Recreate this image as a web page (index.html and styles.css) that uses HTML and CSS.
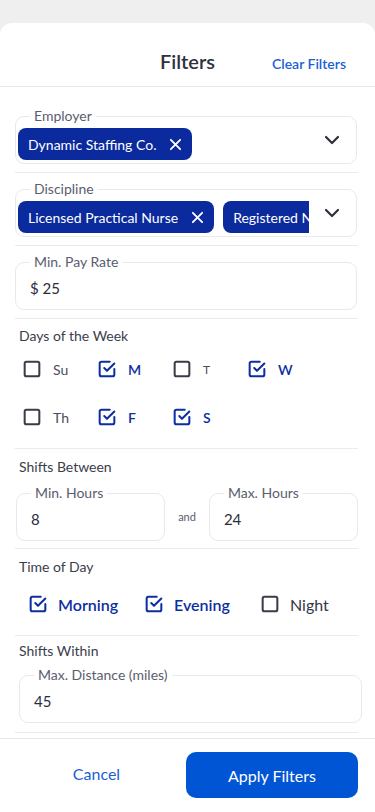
FILE: index.html
```html
<!DOCTYPE html>
<html lang="en">
<head>
    <meta charset="UTF-8">
    <meta name="viewport" content="width=device-width, initial-scale=1.0">
    <title>Filters</title>
    <link rel="stylesheet" href="styles.css">
</head>
<body>
    <div class="sheet">
        <div class="header">
            <span></span>
            <h1 class="title">Filters</h1>
            <a class="clear-link" href="#">Clear Filters</a>
        </div>

        <div class="content">
            <div class="section section-first">
                <fieldset class="field">
                    <legend>Employer</legend>
                    <div class="chips-row">
                        <div class="chips">
                            <span class="chip">Dynamic Staffing Co.
                                <svg class="chip-x" viewBox="0 0 14 14"><path d="M2 2l10 10M12 2l-10 10"/></svg>
                            </span>
                        </div>
                        <svg class="chevron" viewBox="0 0 24 24"><path d="M6 9l6 6l6 -6"/></svg>
                    </div>
                </fieldset>
            </div>

            <div class="section">
                <fieldset class="field">
                    <legend>Discipline</legend>
                    <div class="chips-row">
                        <div class="chips">
                            <span class="chip">Licensed Practical Nurse
                                <svg class="chip-x" viewBox="0 0 14 14"><path d="M2 2l10 10M12 2l-10 10"/></svg>
                            </span>
                            <span class="chip">Registered Nurse
                                <svg class="chip-x" viewBox="0 0 14 14"><path d="M2 2l10 10M12 2l-10 10"/></svg>
                            </span>
                        </div>
                        <svg class="chevron" viewBox="0 0 24 24"><path d="M6 9l6 6l6 -6"/></svg>
                    </div>
                </fieldset>
            </div>

            <div class="section">
                <fieldset class="field">
                    <legend>Min. Pay Rate</legend>
                    <div class="value">$ 25</div>
                </fieldset>
            </div>

            <div class="section section-days">
                <div class="section-title">Days of the Week</div>
                <div class="days">
                    <label class="check"><svg class="box" viewBox="0 0 24 24"><rect x="4" y="4" width="16" height="16" rx="2"/></svg><span>Su</span></label>
                    <label class="check checked"><svg class="box" viewBox="0 0 24 24"><path d="M9 11l3 3l8 -8"/><path d="M20 12v6a2 2 0 0 1 -2 2h-12a2 2 0 0 1 -2 -2v-12a2 2 0 0 1 2 -2h9"/></svg><span>M</span></label>
                    <label class="check"><svg class="box" viewBox="0 0 24 24"><rect x="4" y="4" width="16" height="16" rx="2"/></svg><span class="small">T</span></label>
                    <label class="check checked"><svg class="box" viewBox="0 0 24 24"><path d="M9 11l3 3l8 -8"/><path d="M20 12v6a2 2 0 0 1 -2 2h-12a2 2 0 0 1 -2 -2v-12a2 2 0 0 1 2 -2h9"/></svg><span>W</span></label>
                    <label class="check"><svg class="box" viewBox="0 0 24 24"><rect x="4" y="4" width="16" height="16" rx="2"/></svg><span>Th</span></label>
                    <label class="check checked"><svg class="box" viewBox="0 0 24 24"><path d="M9 11l3 3l8 -8"/><path d="M20 12v6a2 2 0 0 1 -2 2h-12a2 2 0 0 1 -2 -2v-12a2 2 0 0 1 2 -2h9"/></svg><span>F</span></label>
                    <label class="check checked"><svg class="box" viewBox="0 0 24 24"><path d="M9 11l3 3l8 -8"/><path d="M20 12v6a2 2 0 0 1 -2 2h-12a2 2 0 0 1 -2 -2v-12a2 2 0 0 1 2 -2h9"/></svg><span>S</span></label>
                </div>
            </div>

            <div class="section section-hours">
                <div class="section-title">Shifts Between</div>
                <div class="hours">
                    <fieldset class="field">
                        <legend>Min. Hours</legend>
                        <div class="value">8</div>
                    </fieldset>
                    <span class="and">and</span>
                    <fieldset class="field">
                        <legend>Max. Hours</legend>
                        <div class="value">24</div>
                    </fieldset>
                </div>
            </div>

            <div class="section section-time">
                <div class="section-title">Time of Day</div>
                <div class="times">
                    <label class="check check-lg checked"><svg class="box" viewBox="0 0 24 24"><path d="M9 11l3 3l8 -8"/><path d="M20 12v6a2 2 0 0 1 -2 2h-12a2 2 0 0 1 -2 -2v-12a2 2 0 0 1 2 -2h9"/></svg><span>Morning</span></label>
                    <label class="check check-lg checked"><svg class="box" viewBox="0 0 24 24"><path d="M9 11l3 3l8 -8"/><path d="M20 12v6a2 2 0 0 1 -2 2h-12a2 2 0 0 1 -2 -2v-12a2 2 0 0 1 2 -2h9"/></svg><span>Evening</span></label>
                    <label class="check check-lg"><svg class="box" viewBox="0 0 24 24"><rect x="4" y="4" width="16" height="16" rx="2"/></svg><span>Night</span></label>
                </div>
            </div>

            <div class="section section-last">
                <div class="section-title">Shifts Within</div>
                <fieldset class="field field-distance">
                    <legend>Max. Distance (miles)</legend>
                    <div class="value">45</div>
                </fieldset>
            </div>
        </div>

        <div class="footer">
            <a class="cancel-link" href="#">Cancel</a>
            <button class="apply-button">Apply Filters</button>
        </div>
    </div>
</body>
</html>
```

FILE: styles.css
```css
body {
    font-family: Lato, "Noto Sans", Arial, sans-serif;
    background-color: #efefef;
    color: #353746;
    margin: 0;
    padding: 0;
}
.sheet {
    margin-top: 23px;
    background-color: #fff;
    border-radius: 12px 12px 0 0;
    height: 789px;
    overflow: hidden;
}
.header {
    display: grid;
    grid-template-columns: 1fr auto 1fr;
    align-items: baseline;
    box-sizing: border-box;
    height: 64px;
    padding-top: 26px;
    border-bottom: 1px solid #e6e6e8;
}
.title {
    margin: 0;
    font-size: 20px;
    font-weight: 600;
    line-height: 24px;
    color: #2e303c;
}
.clear-link {
    justify-self: end;
    margin-right: 29px;
    color: #1b5fd5;
    font-size: 14px;
    font-weight: 600;
    text-decoration: none;
}
.content {
    padding: 0 17px 5px 15px;
}
.section {
    border-bottom: 1px solid #ebebee;
    padding: 8px 0 8px;
}
.section-first {
    padding-top: 21px;
}
.section-title {
    font-size: 14px;
    line-height: 20px;
    padding-left: 4px;
    color: #3b3d4c;
}

/* outlined fields */
.field {
    margin: 0 1px 0 0;
    padding: 0;
    border: 1px solid #e9e9ed;
    border-radius: 9px;
    min-width: 0;
}
.field legend {
    margin-left: 14px;
    padding: 0 4px;
    font-size: 14px;
    line-height: 16px;
    color: #5a5d6f;
}
.chips-row {
    display: flex;
    align-items: center;
    padding: 4px 12px 3px 2px;
}
.chips {
    flex: 1;
    display: flex;
    gap: 9px;
    overflow: hidden;
    white-space: nowrap;
    min-width: 0;
    margin-right: 11px;
}
.chip {
    flex-shrink: 0;
    display: inline-flex;
    align-items: center;
    gap: 13px;
    height: 32px;
    padding: 0 10px;
    background-color: #0a2a9e;
    color: #fff;
    font-size: 14px;
    border-radius: 8px;
}
.chip-x {
    width: 13px;
    height: 13px;
    fill: none;
    stroke: #fff;
    stroke-width: 2;
    stroke-linecap: round;
}
.chevron {
    width: 24px;
    height: 24px;
    margin-top: -9px;
    fill: none;
    stroke: #2e303c;
    stroke-width: 2.2;
    stroke-linecap: round;
    stroke-linejoin: round;
}
.value {
    padding: 8px 14px 11px;
    font-size: 15px;
    line-height: 20px;
    color: #2b2d3a;
}

/* checkboxes */
.days {
    display: grid;
    grid-template-columns: repeat(4, 75px);
    grid-auto-rows: 40px;
    row-gap: 8px;
    margin: 3px 0 3px 6px;
}
.check {
    display: flex;
    align-items: center;
    gap: 10px;
    font-size: 14px;
    color: #4a4c5b;
}
.check .box {
    width: 22px;
    height: 22px;
    flex-shrink: 0;
    fill: none;
    stroke: #3a3c4a;
    stroke-width: 2.2;
    stroke-linecap: round;
    stroke-linejoin: round;
}
.check.checked {
    color: #0d2ea3;
    font-weight: 600;
}
.check.checked .box {
    stroke: #0d2ea3;
}
.check .small {
    font-size: 12px;
}
.section-days {
    padding: 7px 0 8px;
}

.section-hours {
    padding-bottom: 7px;
}
.hours {
    display: flex;
    align-items: center;
    gap: 13px;
    margin-top: 8px;
    margin-left: 1px;
}
.hours .field {
    flex: 1;
    margin: 0;
}
.and {
    font-size: 11px;
    color: #5a5d6f;
    margin-top: 6px;
}

.section-time {
    padding: 8px 0 11px;
}
.times {
    display: grid;
    grid-template-columns: repeat(3, 116px);
    height: 40px;
    margin: 7px 0 0 12px;
}
.check-lg {
    font-size: 16px;
    gap: 9px;
    color: #353746;
}

.section-time .section-title {
    margin-bottom: 1px;
}

.section-last {
    padding: 5px 0 9px;
}
.field-distance {
    margin: 6px -4px 0 4px;
}

/* footer */
.footer {
    display: flex;
    align-items: center;
    border-top: 1px solid #e6e6e8;
    padding: 13px 17px 13px 15px;
}
.cancel-link {
    flex: 1;
    padding: 0 8px 4px 0;
    text-align: center;
    color: #1b5fd5;
    font-size: 16px;
    text-decoration: none;
}
.apply-button {
    width: 172px;
    height: 46px;
    border: none;
    border-radius: 10px;
    background-color: #0055d4;
    color: #fff;
    font-family: inherit;
    font-size: 16px;
    cursor: pointer;
}
```
